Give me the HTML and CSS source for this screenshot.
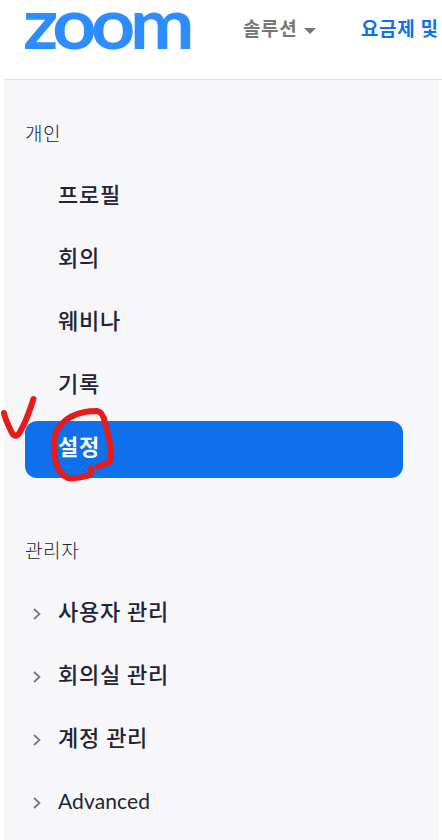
FILE: index.html
```html
<!DOCTYPE html>
<html lang="ko">
<head>
    <meta charset="UTF-8" />
    <meta name="viewport" content="width=device-width, initial-scale=1" />
    <title>설정 - Zoom</title>
    <link rel="stylesheet" href="styles.css">
</head>
<body>
    <header class="header">
        <svg class="logo" width="167" height="40" viewBox="0 0 167 40" role="img" aria-label="zoom">
            <text class="logo-text" x="-2" y="38" textLength="166" lengthAdjust="spacingAndGlyphs">zoom</text>
        </svg>
        <nav class="top-nav">
            <a href="#" class="solution">솔루션<span class="caret"></span></a>
            <a href="#" class="plans">요금제 및</a>
        </nav>
    </header>
    <aside class="sidebar">
        <h2 class="group-title">개인</h2>
        <ul class="menu">
            <li><a href="#">프로필</a></li>
            <li><a href="#">회의</a></li>
            <li><a href="#">웨비나</a></li>
            <li><a href="#">기록</a></li>
            <li><a href="#" class="active">설정</a></li>
        </ul>
        <h2 class="group-title admin">관리자</h2>
        <ul class="menu">
            <li><a href="#"><svg class="chevron" viewBox="0 0 8 12"><path d="M1 1l5.5 5L1 11" /></svg>사용자 관리</a></li>
            <li><a href="#"><svg class="chevron" viewBox="0 0 8 12"><path d="M1 1l5.5 5L1 11" /></svg>회의실 관리</a></li>
            <li><a href="#"><svg class="chevron" viewBox="0 0 8 12"><path d="M1 1l5.5 5L1 11" /></svg>계정 관리</a></li>
            <li><a href="#" class="latin"><svg class="chevron" viewBox="0 0 8 12"><path d="M1 1l5.5 5L1 11" /></svg>Advanced</a></li>
        </ul>
    </aside>
    <!-- Hand-drawn marks -->
    <svg class="marks" width="160" height="110" viewBox="0 0 160 110">
        <path d="M4 28C5 34 9 42 12 48Q16 54 20 47C26 37 30 25 33.500 14" />
        <path d="M91 83.500Q93.500 88 87 91Q77 94 68 93Q58 89 55 74C53 62 54 53 56 47C63 34 77 26 97 26Q103 27 105 38C109 51 111 64 111 72Q111 77 107 78L98 81.500" />
    </svg>
</body>
</html>
```
FILE: styles.css
```css
* {
    margin: 0;
    padding: 0;
    box-sizing: border-box;
}
body {
    position: relative;
    width: 442px;
    height: 840px;
    overflow: hidden;
    background-color: #fff;
    color: #232333;
    font-family: Lato, "Noto Sans CJK KR", sans-serif;
}
a {
    color: inherit;
    text-decoration: none;
}
/* Header */
.header {
    display: flex;
    height: 80px;
    margin-left: 4px;
    padding: 11px 0 0 21px;
    border-bottom: 1px solid #dfdfe1;
}
.logo {
    flex: none;
    overflow: visible;
}
.logo-text {
    font-family: Lato, sans-serif;
    font-size: 71px;
    font-weight: 700;
    letter-spacing: -5px;
    fill: #2d8cff;
}
.top-nav {
    display: flex;
    flex: none;
    margin-left: 51px;
    font-size: 19px;
    font-weight: 700;
    line-height: 36px;
    letter-spacing: 0.6px;
    white-space: nowrap;
}
.solution {
    display: flex;
    align-items: center;
    height: 36px;
    width: 118px;
    color: #777;
}
.caret {
    margin: 4px 0 0 7px;
    border: 6px solid transparent;
    border-top-color: #777;
    border-bottom: 0;
}
.plans {
    color: #0e71eb;
}
/* Sidebar */
.sidebar {
    width: 435px;
    height: 760px;
    margin-left: 4px;
    padding: 39px 36px 0 21px;
    background-color: #f7f7fa;
}
.group-title {
    height: 30px;
    margin-bottom: 20px;
    font-size: 19px;
    font-weight: 300;
    line-height: 30px;
    letter-spacing: 0.6px;
}
.menu {
    list-style: none;
}
.menu li {
    margin-bottom: 6px;
}
.menu a {
    position: relative;
    display: block;
    height: 57px;
    padding-left: 33px;
    border-radius: 12px;
    font-size: 22px;
    font-weight: 500;
    line-height: 52px;
    letter-spacing: 0.7px;
}
.menu a.active {
    background-color: #0e71eb;
    color: #fff;
    font-weight: 700;
}
.menu a.latin {
    font-size: 21px;
    font-weight: 400;
    letter-spacing: 0.1px;
}
.group-title.admin {
    margin-top: 58px;
}
.chevron {
    position: absolute;
    left: 8px;
    top: 22px;
    width: 8px;
    height: 12px;
    fill: none;
    stroke: #747487;
    stroke-width: 1.7;
}
.marks {
    position: absolute;
    left: 0;
    top: 385px;
    fill: none;
    stroke: #e61b1b;
    stroke-width: 6;
    stroke-linecap: round;
    stroke-linejoin: round;
    pointer-events: none;
}
```
